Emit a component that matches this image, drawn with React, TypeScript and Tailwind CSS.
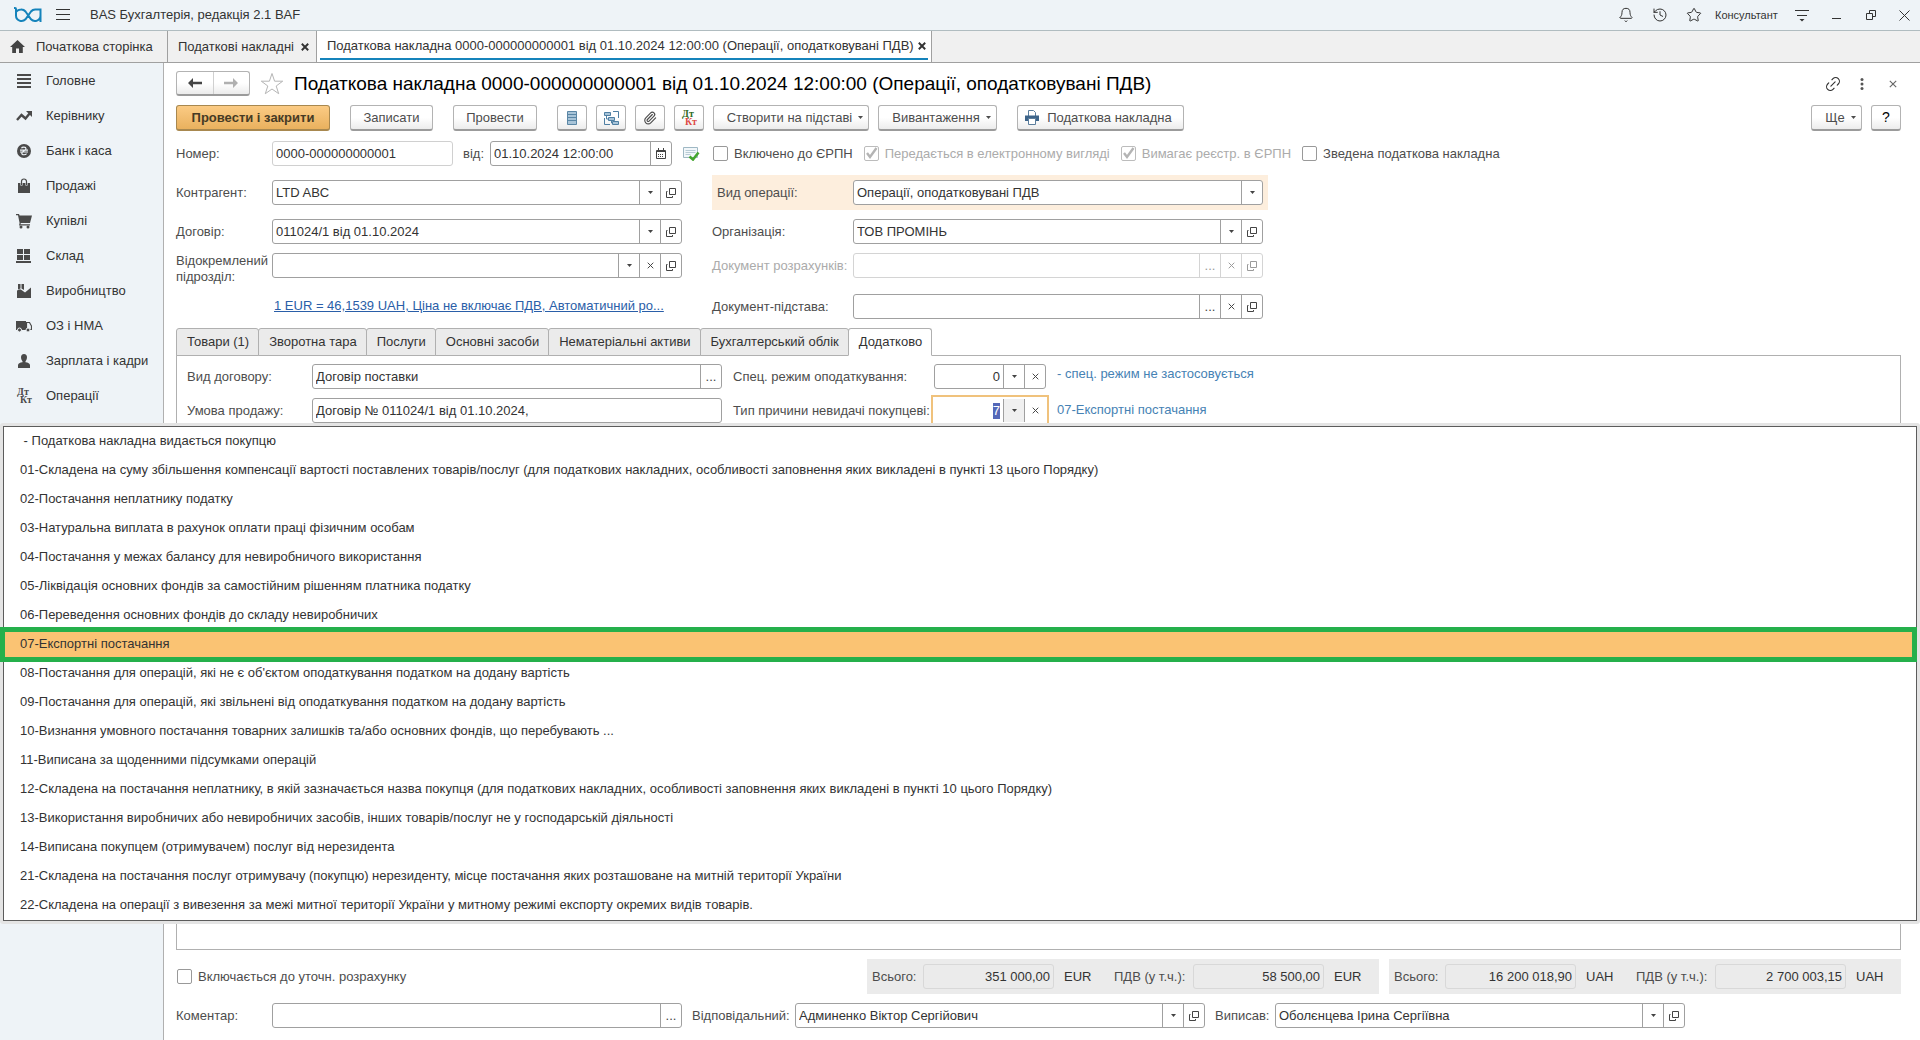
import { useId, type ReactNode } from "react"
import clsx from "clsx"
import { Bell, History, Link2, Paperclip, Star } from "lucide-react"

const menu = [
  { label: "Головне", icon: <MenuLinesIcon /> },
  { label: "Керівнику", icon: <TrendIcon /> },
  { label: "Банк і каса", icon: <MoneyIcon /> },
  { label: "Продажі", icon: <BagIcon /> },
  { label: "Купівлі", icon: <CartIcon /> },
  { label: "Склад", icon: <StockIcon /> },
  { label: "Виробництво", icon: <FactoryIcon /> },
  { label: "ОЗ і НМА", icon: <TruckIcon /> },
  { label: "Зарплата і кадри", icon: <PersonIcon /> },
  { label: "Операції", icon: <DtKtIcon /> },
]

const formTabs = [
  "Товари (1)",
  "Зворотна тара",
  "Послуги",
  "Основні засоби",
  "Нематеріальні активи",
  "Бухгалтерський облік",
  "Додатково",
]

const reasons = [
  " - Податкова накладна видається покупцю",
  "01-Складена на суму збільшення компенсації вартості поставлених товарів/послуг (для податкових накладних, особливості заповнення яких викладені в пункті 13 цього Порядку)",
  "02-Постачання неплатнику податку",
  "03-Натуральна виплата в рахунок оплати праці фізичним особам",
  "04-Постачання у межах балансу для невиробничого використання",
  "05-Ліквідація основних фондів за самостійним рішенням платника податку",
  "06-Переведення основних фондів до складу невиробничих",
  "07-Експортні постачання",
  "08-Постачання для операцій, які не є об'єктом оподаткування податком на додану вартість",
  "09-Постачання для операцій, які звільнені від оподаткування податком на додану вартість",
  "10-Визнання умовного постачання товарних залишків та/або основних фондів, що перебувають ...",
  "11-Виписана за щоденними підсумками операцій",
  "12-Складена на постачання неплатнику, в якій зазначається назва покупця (для податкових накладних, особливості заповнення яких викладені в пункті 10 цього Порядку)",
  "13-Використання виробничих або невиробничих засобів, інших товарів/послуг не у господарській діяльності",
  "14-Виписана покупцем (отримувачем) послуг від нерезидента",
  "21-Складена на постачання послуг отримувачу (покупцю) нерезиденту, місце постачання яких розташоване на митній території України",
  "22-Складена на операції з вивезення за межі митної території України у митному режимі експорту окремих видів товарів.",
]

const selectedReason = 7

function MenuLinesIcon() {
  return (
    <svg width="16" height="16" fill="#4a4a4a">
      <path d="M1 1h14v2H1zM1 5h14v2H1zM1 9h14v2H1zM1 13h14v2H1z" />
    </svg>
  )
}

function TrendIcon() {
  return (
    <svg width="16" height="16" fill="none" stroke="#4a4a4a" strokeWidth="2.4">
      <path d="M1 12l4.5-5 4 3.5L14 5" />
      <path d="M10 3h6v6z" fill="#4a4a4a" stroke="none" />
    </svg>
  )
}

function MoneyIcon() {
  return (
    <svg width="16" height="16" fill="none">
      <circle cx="8" cy="8" r="7" fill="#4a4a4a" />
      <path
        d="M5.5 5.2C6 3.9 10 3.5 10 5.7c0 2-4.2 2.2-4.2 4.5 0 2.2 4.2 1.8 4.7.4M4 7.2h8M4 9h8"
        stroke="#eef3f7"
        strokeWidth="1.2"
      />
    </svg>
  )
}

function BagIcon() {
  return (
    <svg width="16" height="16" fill="none">
      <path d="M2 5h12v10H2z" fill="#4a4a4a" />
      <path d="M5.5 7.5V4a2.5 2.5 0 0 1 5 0v3.5" stroke="#eef3f7" strokeWidth="2.2" />
      <path d="M5.5 7V3.5a2.5 2.5 0 0 1 5 0V7" stroke="#4a4a4a" strokeWidth="1.2" />
    </svg>
  )
}

function CartIcon() {
  return (
    <svg width="16" height="16" fill="#4a4a4a">
      <path d="M0 1h3l.6 1.5H16L14 10H4.8l-.3 1.2H14v1.3H3L3.6 10 2 2.3H0z" />
      <circle cx="5" cy="14" r="1.5" />
      <circle cx="12" cy="14" r="1.5" />
    </svg>
  )
}

function StockIcon() {
  return (
    <svg width="16" height="16" fill="#4a4a4a">
      <path d="M1 1h6v5H1zM8 1h6v5H8zM1 7h6v5H1zM8 7h6v5H8zM0 13h15v2H0z" />
    </svg>
  )
}

function FactoryIcon() {
  return (
    <svg width="16" height="16" fill="#4a4a4a">
      <path d="M1 15V7.5L4 6.3l1.5.7L9 9.5l6-5V15zM2 1h2.5v4.5L2 6.5zM5.5 1H8v6L5.5 5.5z" />
    </svg>
  )
}

function TruckIcon() {
  return (
    <svg width="16" height="16">
      <path d="M0 3h10v9H0z" fill="#4a4a4a" />
      <path d="M10.5 4.5h3L15.5 8v3.5h-5z" fill="none" stroke="#4a4a4a" strokeWidth="1.2" />
      <circle cx="3.5" cy="12" r="2" fill="#4a4a4a" stroke="#eef3f7" />
      <circle cx="12" cy="12" r="2" fill="#4a4a4a" stroke="#eef3f7" />
    </svg>
  )
}

function PersonIcon() {
  return (
    <svg width="16" height="16" fill="#4a4a4a">
      <path d="M8 1c2 0 3 1.3 3 3.2S9.8 8 9.5 8.3v.9c2.5.4 4.5 1 4.5 3V15H2v-2.8c0-2 2-2.6 4.5-3v-.9C6.2 8 5 6.1 5 4.2S6 1 8 1z" />
    </svg>
  )
}

function DtKtIcon({ color = "#4a4a4a", secondColor = "#4a4a4a" }: { color?: string; secondColor?: string }) {
  return (
    <svg width="16" height="16" className="shrink-0 overflow-visible font-['Liberation_Serif',serif] font-bold">
      <text x="1" y="7" fontSize="10" fill={color}>Дт</text>
      <text x="4" y="15" fontSize="10" fill={secondColor}>Кт</text>
    </svg>
  )
}

function Logo() {
  return (
    <svg width="28" height="16" viewBox="0 0 28 16" fill="none" stroke="#1583bb" strokeWidth="2">
      <path d="M0 1h1q1 0 1 1v6.5a5.5 5.5 0 0 0 9.5 3.8L17 4.5A5.5 5.5 0 0 1 22 2.5h4.5V15M26.5 8.5a5.5 5.5 0 0 1-9.5 3.8L11.5 4.5A5.5 5.5 0 0 0 7 2.5Q4 2.5 2 5" />
    </svg>
  )
}

function Caret() {
  return (
    <svg width="5" height="3" className="shrink-0" fill="currentColor">
      <path d="M0 0h5L2.5 3z" />
    </svg>
  )
}

function Cross({ size, bold }: { size: number; bold?: boolean }) {
  return (
    <svg width={size} height={size} viewBox="0 0 10 10" fill="none" stroke="currentColor" strokeWidth={bold ? 2.4 : 1.4}>
      <path d="M1 1l8 8M9 1L1 9" />
    </svg>
  )
}

function OpenIcon() {
  return (
    <svg width="10" height="10" fill="none" stroke="currentColor">
      <path d="M3.5.5h6v6h-6zM1.5 3.5h-1v6h6v-1.5" />
    </svg>
  )
}

function CalendarIcon() {
  return (
    <svg width="10" height="11" fill="none" stroke="currentColor">
      <path d="M.5 2.5h9v8h-9zM.5 3.5h9M2.5 0v2M7.5 0v2" />
      <path d="M2 6.5h6M2 8.5h6" strokeDasharray="1 1" />
    </svg>
  )
}

type ActionKind = "drop" | "clear" | "open" | "more" | "calendar"

const actionIcons: Record<ActionKind, { title: string; icon: ReactNode }> = {
  drop: { title: "Вибрати зі списку", icon: <Caret /> },
  clear: { title: "Очистити", icon: <Cross size={7} /> },
  open: { title: "Відкрити", icon: <OpenIcon /> },
  more: { title: "Вибрати", icon: "..." },
  calendar: { title: "Календар", icon: <CalendarIcon /> },
}

interface FieldProps {
  label: string
  value?: string
  labelClass?: string
  boxClass?: string
  actions?: ActionKind[]
  options?: boolean
  disabled?: boolean
  focused?: boolean
  numeric?: boolean
}

function Field({ label, value = "", labelClass, boxClass = "w-[410px]", actions = [], options, disabled, focused, numeric }: FieldProps) {
  const id = useId()
  return (
    <div className="flex items-center">
      <label htmlFor={id} className={clsx("shrink-0 leading-4", disabled ? "text-[#ababab]" : "text-[#4d4d4d]", labelClass)}>
        {label}
      </label>
      <div
        className={clsx(
          "flex h-[25px] shrink-0 overflow-hidden border bg-white",
          disabled ? "text-[#9a9a9a]" : "text-[#444]",
          focused
            ? "border-transparent outline-2 outline-offset-1 outline-[#f0c27c]"
            : ["rounded-[3px]", disabled ? "border-[#d4d4d4]" : "border-[#a0a0a0]"],
          boxClass
        )}
      >
        {options ? (
          <select id={id} className="min-w-0 flex-1 appearance-none px-[3px] text-[#333] outline-none">
            <option>{value}</option>
          </select>
        ) : focused ? (
          <div className="relative flex min-w-0 flex-1 items-center justify-end">
            <input id={id} defaultValue={value} className="w-full bg-transparent px-[3px] text-right text-transparent outline-none" />
            <span className="absolute right-[3px] bg-[#5468b8] leading-4 text-white" aria-hidden="true">{value}</span>
          </div>
        ) : (
          <input
            id={id}
            defaultValue={value}
            disabled={disabled}
            className={clsx("w-full min-w-0 flex-1 px-[3px] text-[#333] outline-none", numeric && "text-right")}
          />
        )}
        {actions.map((a) => (
          <button
            key={a}
            type="button"
            title={actionIcons[a].title}
            disabled={disabled}
            className={clsx(
              "flex w-[21px] shrink-0 items-center justify-center border-l",
              disabled ? "border-[#d4d4d4]" : "border-[#a0a0a0]",
              focused && a === "drop" && "bg-[#f0f0f0]"
            )}
          >
            {actionIcons[a].icon}
          </button>
        ))}
      </div>
    </div>
  )
}

function CheckField({ label, checked, disabled }: { label: string; checked?: boolean; disabled?: boolean }) {
  return (
    <label className={clsx("flex items-center gap-[6px] whitespace-nowrap", disabled ? "text-[#ababab]" : "text-[#4d4d4d]")}>
      <span className="grid size-[15px] place-items-center">
        <input
          type="checkbox"
          defaultChecked={checked}
          disabled={disabled}
          className={clsx(
            "col-start-1 row-start-1 size-[15px] appearance-none rounded-[2px] border bg-white",
            disabled ? "border-[#bcbcbc]" : "border-[#999]"
          )}
        />
        {checked && (
          <svg width="13" height="13" fill="none" stroke="#b4b4b4" strokeWidth="2.4" className="col-start-1 row-start-1">
            <path d="M2 6l3 4 6.5-9" />
          </svg>
        )}
      </span>
      {label}
    </label>
  )
}

function ToolButton({ children, className, title }: { children: ReactNode; className?: string; title?: string }) {
  return (
    <button
      type="button"
      title={title}
      className={clsx(
        "flex h-[26px] shrink-0 items-center justify-center gap-[6px] rounded-[3px] border border-b-2 border-[#b3b3b3] border-b-[#9b9b9b] bg-linear-to-b from-white from-50% to-[#ececec] text-[#4d4d4d]",
        className
      )}
    >
      {children}
    </button>
  )
}

function Total({ label, value, currency, labelClass }: { label: string; value: string; currency: string; labelClass: string }) {
  const id = useId()
  return (
    <>
      <label htmlFor={id} className={clsx("pl-[5px] text-[#4d4d4d]", labelClass)}>{label}</label>
      <input
        id={id}
        readOnly
        value={value}
        className="h-[25px] w-[131px] rounded-[3px] border border-[#d8d8d8] px-[3px] text-right outline-none"
      />
      <span className="ml-[10px] w-[45px]">{currency}</span>
    </>
  )
}

function TopBar() {
  return (
    <header className="flex h-[31px] items-center border-b border-[#b0bcc0] bg-[#eef3f7] pl-[14px] pr-[10px]">
      <Logo />
      <button type="button" title="Меню" className="ml-[14px]">
        <svg width="14" height="12" stroke="#333" className="block">
          <path d="M0 .5h14M0 5.5h14M0 10.5h14" />
        </svg>
      </button>
      <h1 className="ml-[20px] flex-1">BAS Бухгалтерія, редакція 2.1 BAF</h1>
      <button type="button" title="Сповіщення" className="mr-[18px]"><Bell size={16} strokeWidth={1.5} /></button>
      <button type="button" title="Історія" className="mr-[18px]"><History size={16} strokeWidth={1.5} /></button>
      <button type="button" title="Обране" className="mr-[13px]"><Star size={16} strokeWidth={1.5} /></button>
      <span className="w-[65px] text-[11px]">Консультант</span>
      <button type="button" title="Налаштування" className="ml-[15px]">
        <svg width="14" height="13" stroke="#333" className="block">
          <path d="M0 1.5h14M2 6.5h10" />
          <path d="M4.5 10h5L7 12.5z" fill="#333" stroke="none" />
        </svg>
      </button>
      <button type="button" title="Згорнути" className="ml-[23px]">
        <svg width="9" height="10" stroke="#333" className="block"><path d="M0 8.5h9" /></svg>
      </button>
      <button type="button" title="Відновити" className="ml-[25px]">
        <svg width="10" height="10" stroke="#333" fill="none" className="block"><path d="M.5 3.5h6v6h-6zM3.5 3V.5h6v6H7" /></svg>
      </button>
      <button type="button" title="Закрити" className="ml-[23px]">
        <svg width="11" height="11" stroke="#333" className="block"><path d="M.5.5l10 10M10.5.5l-10 10" /></svg>
      </button>
    </header>
  )
}

function WindowTabs() {
  return (
    <nav className="flex h-8 border-b border-[#a0a0a0] bg-[#f0f0f0]">
      <a href="#home" className="flex w-[168px] items-center border-r border-[#a0a0a0] pl-[10px]">
        <svg width="15" height="13" className="mr-[11px]" fill="#444">
          <path d="M7.5 0L15 7h-2.2v6H9V8.5H6V13H2.2V7H0z" />
        </svg>
        Початкова сторінка
      </a>
      <div className="flex w-[149px] items-center justify-between border-r border-[#a0a0a0] pl-[10px] pr-[7px]">
        <a href="#list">Податкові накладні</a>
        <button type="button" title="Закрити"><Cross size={8} bold /></button>
      </div>
      <div className="flex items-stretch border-r border-[#a0a0a0] bg-white px-[3px] pb-[2px]">
        <div className="flex w-[608px] items-center justify-between border-b-2 border-[#1583bb] pl-[7px] pr-[2px] pt-[2px]">
          <a href="#invoice">Податкова накладна 0000-000000000001 від 01.10.2024 12:00:00 (Операції, оподатковувані ПДВ)</a>
          <button type="button" title="Закрити"><Cross size={8} bold /></button>
        </div>
      </div>
    </nav>
  )
}

function FormHeader() {
  return (
    <div className="flex h-[25px] items-center">
      <div className="flex h-[25px] w-[74px] shrink-0 rounded-[3px] border border-b-2 border-[#b3b3b3] border-b-[#9b9b9b] bg-linear-to-b from-white from-50% to-[#ececec]">
        <button type="button" title="Назад" className="flex flex-1 items-center justify-center border-r border-[#d0d0d0]">
          <svg width="14" height="10" fill="#444"><path d="M0 5l5-5v3.8h9v2.4H5V10z" /></svg>
        </button>
        <button type="button" title="Вперед" className="flex flex-1 items-center justify-center">
          <svg width="14" height="10" fill="#b0b0b0"><path d="M14 5L9 0v3.8H0v2.4h9V10z" /></svg>
        </button>
      </div>
      <button type="button" title="Додати в обране" className="ml-[10px] shrink-0 text-[#b5b5b5]">
        <svg width="24" height="24" fill="none" stroke="currentColor">
          <path d="M12 1.5l2.6 7.7h8.1l-6.5 4.8 2.5 7.7L12 17l-6.7 4.7L7.8 14 1.3 9.2h8.1z" />
        </svg>
      </button>
      <h2 className="ml-[10px] flex-1 truncate text-[19px] leading-6 text-black">
        Податкова накладна 0000-000000000001 від 01.10.2024 12:00:00 (Операції, оподатковувані ПДВ)
      </h2>
      <button type="button" title="Посилання" className="mr-[18px]"><Link2 size={18} strokeWidth={1.5} className="-rotate-45" /></button>
      <button type="button" title="Ще дії" className="mr-[25px]">
        <svg width="4" height="12" fill="#555" className="block">
          <circle cx="2" cy="1.5" r="1.5" /><circle cx="2" cy="6" r="1.5" /><circle cx="2" cy="10.5" r="1.5" />
        </svg>
      </button>
      <button type="button" title="Закрити" className="mr-1 text-[#666]"><Cross size={8} /></button>
    </div>
  )
}

function Toolbar() {
  return (
    <div className="mt-[9px] flex items-center">
      <button
        type="button"
        className="h-[26px] w-[154px] shrink-0 rounded-[3px] border border-b-2 border-[#a8884f] bg-linear-to-b from-[#fbcb84] to-[#e9b15e] font-bold text-[#463a24]"
      >
        Провести і закрити
      </button>
      <ToolButton className="ml-5 w-[83px]">Записати</ToolButton>
      <ToolButton className="ml-5 w-[84px]">Провести</ToolButton>
      <div className="ml-5 flex gap-[9px]">
        <ToolButton className="w-[30px]" title="Реєстр">
          <svg width="10" height="14"><path d="M.5.5h9v13h-9z" fill="#a8c4d8" stroke="#5a86a5" /><path d="M1 3.5h8M1 6.5h8M1 9.5h8" stroke="#5a86a5" /></svg>
        </ToolButton>
        <ToolButton className="w-[30px]" title="Структура підпорядкованості">
          <svg width="15" height="14" fill="#a8c4d8" stroke="#4f7fa3">
            <path d="M.5 1.5h6v3h-6zM4.5 6.5h6v3h-6zM8.5 10.5h6v3h-6z" />
            <path d="M9 .5h5.5V7M6 13.5H.5V7M2.5 5v3h2M7.5 10v2h1" fill="none" />
          </svg>
        </ToolButton>
        <ToolButton className="w-[30px]" title="Файли"><Paperclip size={14} strokeWidth={2} /></ToolButton>
        <ToolButton className="w-[30px]" title="Проводки"><DtKtIcon color="#2f6b1e" secondColor="#dd4a45" /></ToolButton>
        <ToolButton className="w-[156px] pl-2">Створити на підставі <Caret /></ToolButton>
        <ToolButton className="w-[119px] pl-2">Вивантаження <Caret /></ToolButton>
      </div>
      <ToolButton className="ml-5 w-[167px] gap-[8px] pr-1">
        <svg width="14" height="15">
          <path d="M3.5 6V.5h5l2 2V6" fill="#fff" stroke="#5a7d9c" />
          <path d="M0 5.5h14V11H0z" fill="#3d648a" />
          <path d="M3.5 8.5h7v6h-7z" fill="#fff" stroke="#5a7d9c" />
        </svg>
        Податкова накладна
      </ToolButton>
      <div className="ml-auto flex gap-[9px]">
        <ToolButton className="w-[51px] pl-2">Ще <Caret /></ToolButton>
        <ToolButton className="w-[30px] text-[14px] text-black" title="Довідка">?</ToolButton>
      </div>
    </div>
  )
}

function NumberField() {
  return (
    <div className="flex items-center">
      <label htmlFor="doc-number" className="w-[96px] text-[#4d4d4d]">Номер:</label>
      <input
        id="doc-number"
        defaultValue="0000-000000000001"
        className="h-[25px] w-[181px] rounded-[3px] border border-[#d0d0d0] px-[3px] outline-none"
      />
    </div>
  )
}

function DocumentFields() {
  return (
    <>
      <div className="mt-[10px] flex items-center">
        <NumberField />
        <Field label="від:" value="01.10.2024 12:00:00" labelClass="ml-[10px] w-[27px]" boxClass="w-[182px]" actions={["calendar"]} />
        <svg width="17" height="14" className="ml-[11px] mr-[13px]">
          <path d="M.5.5h14v10H.5z" fill="#f2f7fa" stroke="#9fb8c4" />
          <path d="M2.5 3.5h10M2.5 5.5h10M2.5 7.5h5" stroke="#b7cbd5" />
          <path d="M6.5 9.5l3.5 3 5.5-7" fill="none" stroke="#43a52e" strokeWidth="2.6" />
        </svg>
        <div className="flex gap-[11px]">
          <CheckField label="Включено до ЄРПН" />
          <CheckField label="Передається в електронному вигляді" checked disabled />
          <CheckField label="Вимагає реєстр. в ЄРПН" checked disabled />
          <CheckField label="Зведена податкова накладна" />
        </div>
      </div>
      <div className="mt-[9px] flex items-start gap-[30px]">
        <div className="flex flex-col pt-[5px]">
          <div className="flex flex-col gap-[14px]">
            <Field label="Контрагент:" value="LTD ABC" labelClass="w-[96px]" actions={["drop", "open"]} />
            <Field label="Договір:" value="011024/1 від 01.10.2024" labelClass="w-[96px]" actions={["drop", "open"]} />
          </div>
          <div className="mt-[9px] h-[45px]">
            <Field label="Відокремлений підрозділ:" labelClass="h-[25px] w-[96px]" actions={["drop", "clear", "open"]} />
          </div>
          <a href="#prices" className="ml-[98px] w-[394px] leading-4 text-[#2a5ea8] underline">
            1 EUR = 46,1539 UAH, Ціна не включає ПДВ, Автоматичний ро...
          </a>
        </div>
        <div className="flex flex-col">
          <div className="bg-[#fdeedd] p-[5px]">
            <Field label="Вид операції:" value="Операції, оподатковувані ПДВ" labelClass="w-[136px]" actions={["drop"]} options />
          </div>
          <div className="mt-[9px] flex flex-col gap-[9px]">
            <Field label="Організація:" value="ТОВ ПРОМІНЬ" labelClass="w-[141px]" actions={["drop", "open"]} />
            <Field label="Документ розрахунків:" labelClass="w-[141px]" actions={["more", "clear", "open"]} disabled />
          </div>
          <div className="mt-4">
            <Field label="Документ-підстава:" labelClass="w-[141px]" actions={["more", "clear", "open"]} />
          </div>
        </div>
      </div>
    </>
  )
}

function DetailsPanel() {
  return (
    <>
      <div role="tablist" className="mt-[9px] flex">
        {formTabs.map((tab, i) => {
          const active = i === formTabs.length - 1
          return (
            <button
              key={tab}
              type="button"
              role="tab"
              aria-selected={active}
              className={clsx(
                "z-10 -mb-px h-7 rounded-t-[3px] border border-[#b0b0b0] pl-[10px] pr-[9px]",
                i > 0 && "-ml-px",
                active ? "border-b-white bg-white" : "bg-[#ebebeb]"
              )}
            >
              {tab}
            </button>
          )
        })}
      </div>
      <div className="flex flex-1 items-start gap-[11px] border border-[#b0b0b0] px-[10px] py-2">
        <div className="flex flex-col gap-[9px]">
          <Field label="Вид договору:" value="Договір поставки" labelClass="w-[125px]" actions={["more"]} />
          <Field label="Умова продажу:" value="Договір № 011024/1 від 01.10.2024," labelClass="w-[125px]" />
        </div>
        <div className="flex flex-col gap-[9px]">
          <Field label="Спец. режим оподаткування:" value="0" labelClass="w-[201px]" boxClass="w-[112px]" actions={["drop", "clear"]} numeric />
          <Field label="Тип причини невидачі покупцеві:" value="7" labelClass="w-[201px]" boxClass="w-[112px]" actions={["drop", "clear"]} focused />
        </div>
        <div className="flex flex-col gap-5 pt-[2px] leading-4 text-[#4682b4]">
          <p>- спец. режим не застосовується</p>
          <p>07-Експортні постачання</p>
        </div>
      </div>
    </>
  )
}

function FormFooter() {
  return (
    <footer className="pb-3">
      <div className="mt-[9px] flex h-[35px] items-center gap-[10px]">
        <div className="mr-auto pl-px">
          <CheckField label="Включається до уточн. розрахунку" />
        </div>
        <div className="flex h-full items-center bg-[#ebebeb]">
          <Total label="Всього:" value="351 000,00" currency="EUR" labelClass="w-[56px]" />
          <Total label="ПДВ (у т.ч.):" value="58 500,00" currency="EUR" labelClass="w-[84px]" />
        </div>
        <div className="flex h-full items-center bg-[#ebebeb]">
          <Total label="Всього:" value="16 200 018,90" currency="UAH" labelClass="w-[56px]" />
          <Total label="ПДВ (у т.ч.):" value="2 700 003,15" currency="UAH" labelClass="w-[84px]" />
        </div>
      </div>
      <div className="mt-[9px] flex gap-[10px]">
        <Field label="Коментар:" labelClass="w-[96px]" actions={["more"]} />
        <Field label="Відповідальний:" value="Админенко Віктор Сергійович" labelClass="w-[103px]" actions={["drop", "open"]} />
        <Field label="Виписав:" value="Оболєнцева Ірина Сергіївна" labelClass="w-[60px]" actions={["drop", "open"]} />
      </div>
    </footer>
  )
}

function ReasonList() {
  return (
    <div className="absolute inset-x-0 top-[423px] z-20 rounded-[3px] bg-[#e4e4e4] p-[3px]">
      <ul role="listbox" aria-label="Тип причини невидачі покупцеві" className="border border-[#5c5c5c] bg-white">
        {reasons.map((reason, i) => (
          <li
            key={reason}
            role="option"
            aria-selected={i === selectedReason}
            className={clsx("relative h-[29px] whitespace-pre pl-4 leading-7", i === selectedReason && "bg-[#fac373]")}
          >
            {reason}
            {i === selectedReason && (
              <span className="absolute -inset-y-[3px] -left-1 -right-px border-[5px] border-[#25b04b]" />
            )}
          </li>
        ))}
      </ul>
    </div>
  )
}

export default function App() {
  return (
    <div className="relative flex min-h-screen flex-col bg-white font-['Liberation_Sans',Arial,sans-serif] text-[13px] text-[#333]">
      <TopBar />
      <WindowTabs />
      <div className="flex flex-1">
        <aside className="w-[164px] shrink-0 border-r border-[#b0b0b0] bg-[#eef3f7]">
          <ul>
            {menu.map((item) => (
              <li key={item.label}>
                <a href="#section" className="flex h-[35px] items-center gap-[14px] whitespace-nowrap pl-4 pt-px">
                  {item.icon}
                  {item.label}
                </a>
              </li>
            ))}
          </ul>
        </aside>
        <main className="flex min-w-0 flex-1 flex-col pl-3 pr-[19px] pt-2">
          <FormHeader />
          <Toolbar />
          <DocumentFields />
          <DetailsPanel />
          <FormFooter />
        </main>
      </div>
      <ReasonList />
    </div>
  )
}
